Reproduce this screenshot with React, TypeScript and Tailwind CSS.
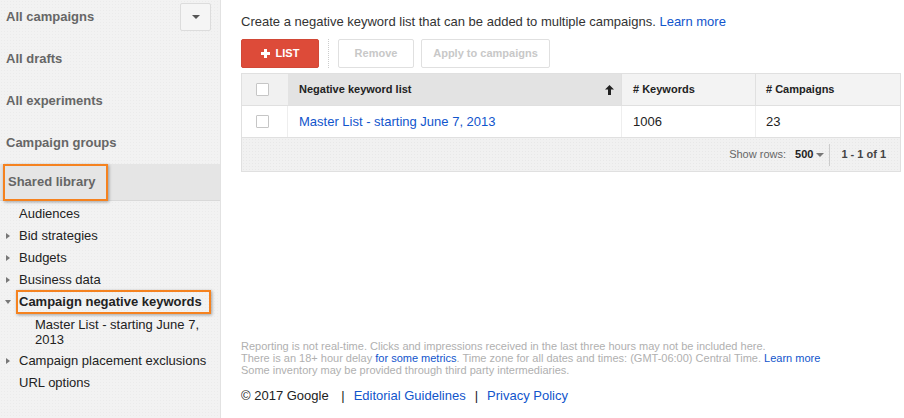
import React from "react";

const FONT = { fontFamily: '"Liberation Sans", Arial, sans-serif' };

function Checkbox() {
  return <span className="block w-[13px] h-[13px] border border-[#c6c6c6] rounded-[1px] bg-white" />;
}

function Caret({ open }: { open?: boolean }) {
  return open ? (
    <span className="absolute left-[5px] top-[9px] w-0 h-0 border-l-[3px] border-r-[3px] border-t-[4px] border-l-transparent border-r-transparent border-t-[#777]" />
  ) : (
    <span className="absolute left-[6px] top-[8px] w-0 h-0 border-t-[3px] border-b-[3px] border-l-[4px] border-t-transparent border-b-transparent border-l-[#777]" />
  );
}

const sub = [
  { label: "Audiences" },
  { label: "Bid strategies", caret: true },
  { label: "Budgets", caret: true },
  { label: "Business data", caret: true },
];

function Sidebar() {
  return (
    <aside className="w-[221px] shrink-0 bg-[#f2f2f2] border-r border-[#e2e2e2] min-h-[418px] bg-[radial-gradient(#ebebeb_1px,transparent_1px)] bg-[size:3px_3px]">
      <div className="-mt-[4px]">
        <div className="h-[42px] flex items-center justify-between pl-[6px] pr-[9px]">
          <span className="text-[13px] font-bold text-[#666]">All campaigns</span>
          <span className="-mt-[1px] w-[31px] h-[28px] border border-[#dcdcdc] rounded-[2px] bg-[#f5f5f5] flex items-center justify-center">
            <span className="w-0 h-0 border-l-[4px] border-r-[4px] border-t-[4px] border-l-transparent border-r-transparent border-t-[#555]" />
          </span>
        </div>
        {["All drafts", "All experiments", "Campaign groups"].map((t) => (
          <div key={t} className="h-[42px] flex items-center pl-[6px]">
            <span className="text-[13px] font-bold text-[#666]">{t}</span>
          </div>
        ))}
      </div>
      <div className="h-[37px] bg-[#e5e5e5] border-b border-[#d9d9d9] flex items-center pl-[3px]">
        <span className="h-[37px] w-[105px] border-2 border-[#f5821f] shadow-[1px_1px_3px_rgba(0,0,0,0.35)] flex items-center pl-[3px] text-[13px] font-bold text-[#666]">
          Shared library
        </span>
      </div>
      <ul className="pt-[2px] text-[13px] text-[#222]">
        {sub.map((s) => (
          <li key={s.label} className="relative h-[22px] leading-[22px] pl-[19px]">
            {s.caret && <Caret />}
            {s.label}
          </li>
        ))}
        <li className="relative h-[22px] pl-[16px] flex items-center">
          <Caret open />
          <span className="h-[24px] w-[195px] border-2 border-[#f5821f] shadow-[1px_1px_3px_rgba(0,0,0,0.35)] flex items-center pl-[1px] font-bold text-[#222]">
            Campaign negative keywords
          </span>
        </li>
        <li className="pl-[35px] pr-[10px] pt-[4px] pb-[3px] leading-[15px] text-[#222]">
          Master List - starting June 7, 2013
        </li>
        <li className="relative h-[22px] leading-[22px] pl-[19px]">
          <Caret />
          Campaign placement exclusions
        </li>
        <li className="relative h-[22px] leading-[22px] pl-[19px]">URL options</li>
      </ul>
    </aside>
  );
}

function Main() {
  return (
    <main className="flex-1 pl-[20px] pr-[3px] pt-[13px] flex flex-col min-h-[418px]">
      <p className="text-[13px] text-[#333] leading-[18px]">
        Create a negative keyword list that can be added to multiple campaigns.{" "}
        <span className="text-[#1155cc]">Learn more</span>
      </p>
      <div className="flex items-center mt-[8px] h-[29px]">
        <button className="h-[29px] w-[78px] rounded-[2px] bg-[#dd4b39] border border-[#d14836] text-white text-[11px] font-bold flex items-center justify-center gap-[6px]">
          <span className="relative w-[9px] h-[9px]">
            <span className="absolute left-[3px] top-0 w-[3px] h-[9px] bg-white" />
            <span className="absolute left-0 top-[3px] w-[9px] h-[3px] bg-white" />
          </span>
          LIST
        </button>
        <span className="mx-[9px] h-[29px] border-l border-dotted border-[#ccc]" />
        <button className="h-[29px] w-[76px] rounded-[2px] border border-[#e0e0e0] bg-white text-[11px] font-bold text-[#c8c8c8]">
          Remove
        </button>
        <button className="ml-[7px] h-[29px] w-[129px] rounded-[2px] border border-[#e0e0e0] bg-white text-[11px] font-bold text-[#c8c8c8]">
          Apply to campaigns
        </button>
      </div>
      <div className="mt-[5px] border border-[#e0e0e0]">
        <div className="flex h-[32px] text-[11px] font-bold text-[#222] border-b border-[#e0e0e0]">
          <div className="w-[46px] bg-[#f1f1f1] flex items-center pl-[14px]">
            <Checkbox />
          </div>
          <div className="w-[333px] bg-[#e3e3e3] flex items-center justify-between pl-[11px] pr-[7px]">
            <span>Negative keyword list</span>
            <svg width="9" height="10" viewBox="0 0 9 10">
              <path d="M4.5 0 L9 4.5 L6 4.5 L6 10 L3 10 L3 4.5 L0 4.5 Z" fill="#222" />
            </svg>
          </div>
          <div className="w-[134px] bg-[#f3f3f3] border-l border-[#e0e0e0] flex items-center pl-[11px]"># Keywords</div>
          <div className="flex-1 bg-[#f3f3f3] border-l border-[#e0e0e0] flex items-center pl-[10px]"># Campaigns</div>
        </div>
        <div className="flex h-[31px] text-[13px] bg-white">
          <div className="w-[46px] flex items-center pl-[14px] border-r border-[#eee]">
            <Checkbox />
          </div>
          <div className="w-[333px] flex items-center pl-[11px] text-[#1155cc]">Master List - starting June 7, 2013</div>
          <div className="w-[134px] border-l border-[#eee] flex items-center pl-[11px] text-[#222]">1006</div>
          <div className="flex-1 border-l border-[#eee] flex items-center pl-[10px] text-[#222]">23</div>
        </div>
        <div className="h-[34px] border-t border-[#e0e0e0] bg-[#f1f1f1] bg-[radial-gradient(#e8e8e8_1px,transparent_1px)] bg-[size:3px_3px] flex items-center justify-end text-[11px] pr-[14px]">
          <span className="text-[#666]">Show rows:</span>
          <span className="ml-[9px] font-bold text-[#222]">500</span>
          <span className="ml-[3px] w-0 h-0 border-l-[4px] border-r-[4px] border-t-[4px] border-l-transparent border-r-transparent border-t-[#777]" />
          <span className="ml-[5px] mr-[11px] h-[22px] border-l border-[#ccc]" />
          <span className="font-bold text-[#444]">1 - 1 of 1</span>
        </div>
      </div>
      <div className="mt-auto pb-[13px]">
        <div className="text-[11px] leading-[12px] text-[#b0b0b0]">
          <div>Reporting is not real-time. Clicks and impressions received in the last three hours may not be included here.</div>
          <div>
            There is an 18+ hour delay <span className="text-[#1155cc]">for some metrics</span>. Time zone for all dates and times: (GMT-06:00) Central Time.{" "}
            <span className="text-[#1155cc]">Learn more</span>
          </div>
          <div>Some inventory may be provided through third party intermediaries.</div>
        </div>
        <div className="mt-[11px] text-[13px] text-[#222] leading-[18px]">
          © 2017 Google <span className="mx-[9px]">|</span>
          <span className="text-[#1155cc]">Editorial Guidelines</span>
          <span className="mx-[9px]">|</span>
          <span className="text-[#1155cc]">Privacy Policy</span>
        </div>
      </div>
    </main>
  );
}

export default function App() {
  return (
    <div className="w-[904px] h-[418px] flex overflow-hidden bg-white" style={FONT}>
      <Sidebar />
      <Main />
    </div>
  );
}
